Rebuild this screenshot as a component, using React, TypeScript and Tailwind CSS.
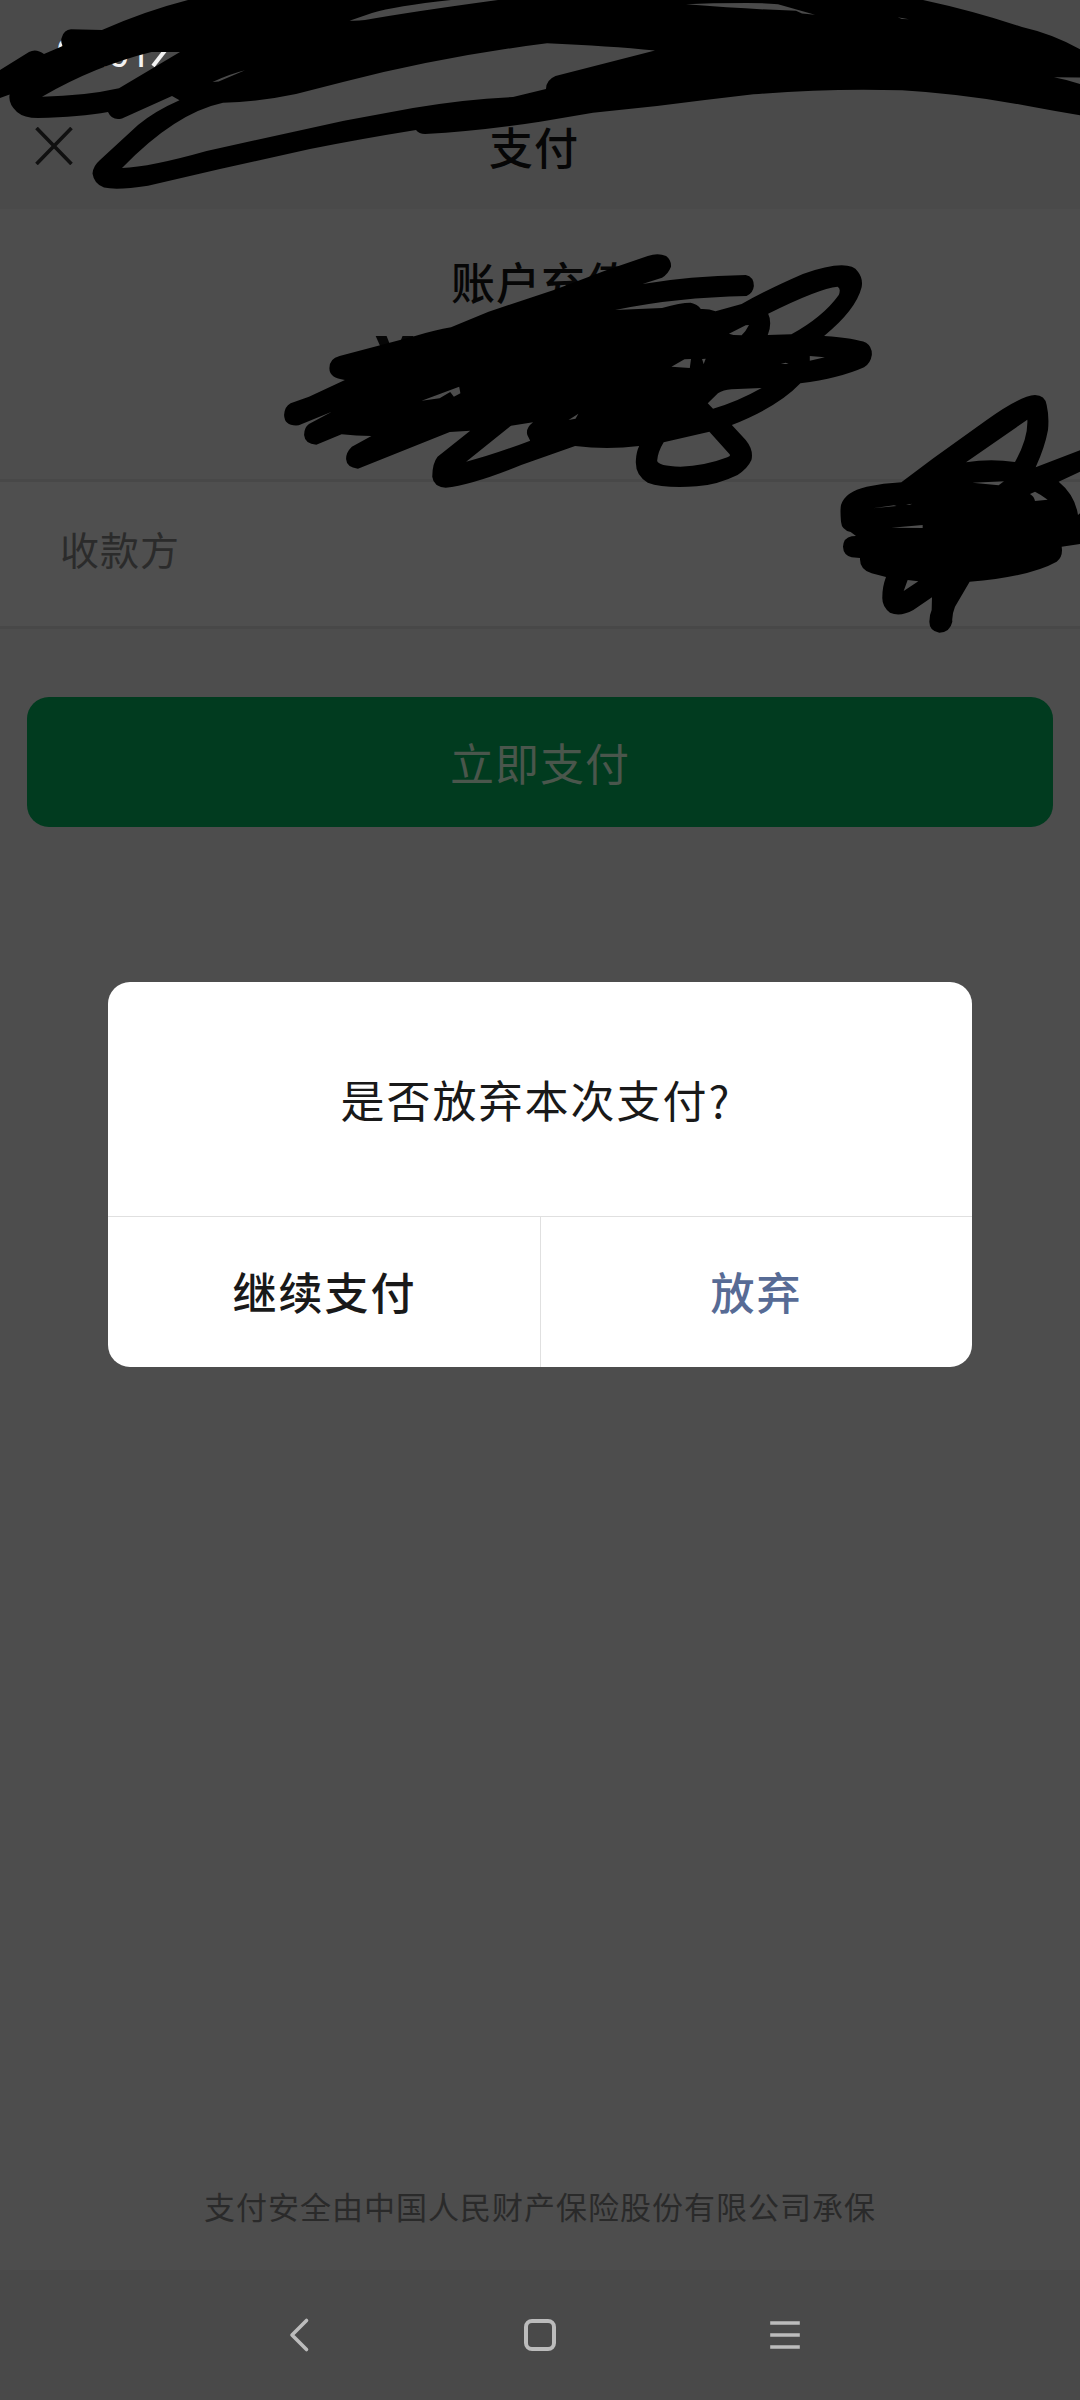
/**
 * App - payment screen with the "give up this payment?" confirmation dialog
 *
 * - Dimmed checkout page (title, amount, payee, pay button, insurance note)
 * - Confirmation dialog on top
 * - Android navigation bar
 * - Hand-drawn redaction strokes over the private parts
 */

import React from 'react'

interface ScribbleProps {
  d: string
  transform?: string
}

// Filled scribble, gaps between the strokes are cut out with evenodd
const Scribble: React.FC<ScribbleProps> = ({ d, transform }) => (
  <path d={d} transform={transform} fill="#000" fillRule="evenodd" />
)

const statusScribble = `
  M0 70L29 52Q36 48 44 54L62.7 46Q60 41 62 37Q64 30 71 29.3L102 30Q145 11 188 0
  L451 0Q395 6 372 13L349.5 20.7Q358 21 365 20Q413 11.5 498 0
  L923 0Q974 11 1022 27Q1053 34 1080 49.3L1080 77.5L1054 77.3Q1068 80 1080 84L1080 115.3
  Q1055 111 1032 106.7Q965 94 902 90.3Q830 88 753.5 94.3L705 100L657 106L593 112.7L540 121.7
  Q480 131 425 134Q419 134 416 130Q360 139 310 149L220 169L148 185.7Q117 190.5 104 187.5
  Q94 184 92.5 173.5Q93 166 100 160L138 125Q155 111 179.5 100.3L172 96L122 118.5Q112 121 108 112
  Q80 117 38 118Q24 118 17 112Q8 104 9.6 94.5L0 98Z
  M42 96.7Q95 66 151.5 52L180 52L119 88.3Q85 96 42 96.7Z
  M212.5 82Q230 74 245 70.3L218.7 81.5Z
  M122 168Q175 113 223 102.7Q258 102 296 94L344 81.7Q445 56 547 43.3Q609 46 655 50.6L616 60.6L555.5 76
  Q546 80 546 89L513 97Q465 99 413 108L344 120.7L206.6 151Q150 167 122 168Z
  M686 4.3Q710 3 747 3Q765 3 778 4.3L815 14.7L802 13.6L796 10.8Q747 9 686 4.3Z
  M897.5 17.3L909 19.3L902 19Z
`

const amountScribble = `
  M468 292L560 245L720 180L850 120L950 78Q975 68 995 78Q1008 90 1007 110Q1000 132 985 143L937 162
  Q1050 138 1190 135Q1210 140 1210 168Q1208 190 1192 198Q1020 202 870 240L985 234Q1030 218 1055 218
  Q1072 222 1080 237Q1100 236 1116 244L1180 222Q1240 180 1330 132Q1390 106 1425 106Q1455 106 1465 125
  Q1478 145 1474 172Q1460 240 1382 318Q1460 325 1485 338Q1500 350 1499 375Q1496 400 1480 412
  Q1420 445 1324 460Q1270 530 1156 585L1190 630Q1210 660 1204 690Q1195 715 1170 735Q1120 765 1070 769
  Q990 776 950 758Q918 735 921 690Q922 665 929 648Q850 660 772 648L640 705Q520 765 455 773
  Q425 770 422 740Q422 700 435 680L515 602L465 606L240 716Q212 712 211 688Q210 668 225 650L273 618
  Q235 618 200 613L138 644Q110 642 108 615Q108 592 120 582L176 545L95 586Q60 590 59 555
  Q60 530 75 520L120 500L208 450Q170 445 170 415Q170 385 195 378L380 318Q430 300 468 292Z
  M1149 311L1190 286L1198 285Q1190 305 1180 316L1160 315Z
  M1244 315Q1250 300 1250 280Q1250 262 1245 251Q1370 175 1415 170Q1424 175 1418 195Q1380 260 1302 313Z
  M1008 410L1040 388L1056 387L1053 414Z
  M1083 387L1092 386L1087 402Z
  M1347 378L1384 382L1347 392Z
  M1276 402L1288 398L1295 402Z
  M396 512L488 470L491 490L475 500L466 486L440 505Z
  M1097 520L1122 490Q1135 480 1155 478L1229 474Q1170 515 1110 536Z
  M756 570L780 551L773 566Z
  M505 695L615 587L669 577Q650 595 655 615L662 632Q570 675 505 695Z
  M989 637L1101 605L1150 672Q1155 678 1145 682Q1090 708 1030 710Q975 708 973 692Q975 665 989 637Z
`

const payeeScribble = `
  M304 307L400 235L560 120Q660 48 705 45Q735 45 740 75Q748 110 744 150Q735 200 707 262L840 211L840 275
  L776 305Q825 345 834 405L840 400L840 492L785 500Q790 530 770 545Q690 590 509 605L465 680
  Q455 705 457 725Q450 757 418 758Q388 753 388 725Q388 705 395 690L396 652L340 690Q300 712 270 698
  Q245 680 247 650Q247 620 258 591L215 580Q178 568 180 534L155 532Q130 525 129 500Q131 473 155 469
  L168 468L152 456Q125 450 123 425Q120 390 123 375Q135 335 200 320Q250 310 304 307Z
  M498 247L682 119Q685 175 645 246Q570 235 498 247Z
  M517 308L612 304L596 316Z
  M705 335Q725 345 743 359L705 363Q703 350 690 342Z
  M219 385L282 376L290 378Z
  M318 374L337 371L328 375Z
  M274 443L368 435V444Z
  M323 600L355 604L311 633Z
`

const CloseIcon = () => (
  <svg className="h-[38px] w-[38px]" viewBox="0 0 38 38" fill="none" stroke="#101010" strokeWidth="3.6">
    <path d="M1.5 1L36.5 37M36.5 1L1.5 37" />
  </svg>
)

const Header = () => (
  <header className="flex h-[209px] flex-col bg-[#4a4a4a]">
    <div className="flex h-[84px] items-center pt-[24px] pl-[56px] font-[Roboto] text-[38px] leading-none text-[#f2f2f2]">
      <span>06:01</span>
      <svg className="h-[28px] w-[24px]" viewBox="0 0 24 28" fill="none" stroke="currentColor" strokeWidth="4">
        <path d="M16 8L2 26" />
      </svg>
    </div>
    <div className="grid h-[125px] grid-cols-[90px_1fr_102px] items-center pb-[2px]">
      <div className="pl-[35px]">
        <CloseIcon />
      </div>
      <h1 className="text-center text-[44px] leading-[44px] font-medium tracking-[1px] text-[#060606]">支付</h1>
    </div>
  </header>
)

const NavBar = () => (
  <nav className="flex h-[130px] items-center bg-[#494949] pl-[282px]">
    <svg className="h-[40px] w-[530px]" viewBox="0 0 530 40" fill="none" stroke="#bcbcbc" strokeWidth="3.6" strokeLinecap="round" strokeLinejoin="round">
      <path d="M24.500 5.500L10 20L24.500 34.500" />
      <rect x="244" y="6" width="28" height="28" rx="6" strokeWidth="4" />
      <path d="M490 8H516M490 20H516M490 32H516" strokeLinecap="square" />
    </svg>
  </nav>
)

const ConfirmDialog = () => (
  <div className="absolute top-[982px] left-[108px] flex h-[385px] w-[864px] flex-col overflow-hidden rounded-[22px] bg-white text-[44px] leading-[64px] tracking-[2px] text-[#191919]">
    <div className="flex h-[235px] items-center justify-center border-b border-[#e0e0e0] pr-2">
      是否放弃本次支付?
    </div>
    <div className="grid flex-1 grid-cols-2 font-medium">
      <button className="pb-[3px] pl-px">继续支付</button>
      <button className="border-l border-[#e0e0e0] pb-[3px] text-[#576b95]">放弃</button>
    </div>
  </div>
)

export default function App() {
  return (
    <div className="relative flex h-[2400px] w-[1080px] flex-col overflow-hidden bg-[#4d4d4d] font-['Noto_Sans_CJK_SC',sans-serif]">
      <Header />

      <section className="flex h-[273px] flex-col items-center border-b-[3px] border-[#484848] bg-[#4d4d4d]">
        <p className="pt-[40px] pl-[2px] text-[44px] leading-[64px] font-medium tracking-[1px] text-[#060606]">账户充值</p>
        <p className="mt-[11px] mr-[291px] font-[Roboto] text-[72px] leading-[80px] font-bold text-[#060606]">¥</p>
      </section>

      <section className="flex h-[147px] items-center border-b-[3px] border-[#484848] bg-[#4f4f4f] px-[60px] pb-[11px] text-[39px] tracking-[1px] text-[#2b2b2b]">
        收款方
      </section>

      <button className="mx-[27px] mt-[68px] h-[130px] rounded-[22px] bg-[#013b1f] pb-px text-[44px] tracking-[1px] text-[#4a564c]">
        立即支付
      </button>

      <footer className="mt-auto pb-[41px] text-center text-[31px] leading-[46px] tracking-[1px] text-[#2a2a2a]">
        支付安全由中国人民财产保险股份有限公司承保
      </footer>
      <NavBar />

      <svg className="pointer-events-none absolute inset-0 h-[2400px] w-[1080px]" viewBox="0 0 1080 2400">
        <Scribble d={statusScribble} />
        <Scribble d={amountScribble} transform="translate(260 230) scale(0.40816 0.33333)" />
        <Scribble d={payeeScribble} transform="translate(800 380) scale(0.33333)" />
      </svg>

      <ConfirmDialog />
    </div>
  )
}
